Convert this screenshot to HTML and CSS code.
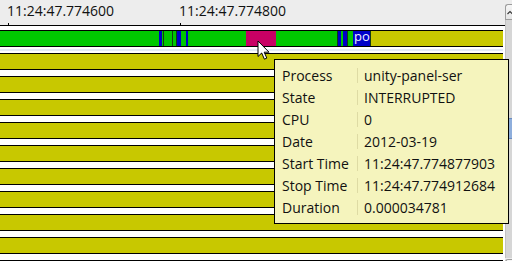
FILE: index.html
```html
<!DOCTYPE html>
<html lang="en">
<head>
    <meta charset="UTF-8">
    <meta name="viewport" content="width=device-width, initial-scale=1.0">
    <title>CPU Timeline</title>
    <link rel="stylesheet" href="styles.css">
</head>
<body>
    <div class="window">
        <div class="chart">
            <div class="ruler">
                <div class="tick"><span>11:24:47.774600</span><i></i></div>
                <div class="tick"><span>11:24:47.774800</span><i></i></div>
            </div>
            <div class="rows">
                <div class="row cpu">
                    <div class="seg run" style="width:159px"></div>
                    <div class="seg irq" style="width:3px"></div>
                    <div class="seg run" style="width:1px"></div>
                    <div class="seg edge" style="width:1px"></div>
                    <div class="seg run" style="width:8px"></div>
                    <div class="seg edge" style="width:1px"></div>
                    <div class="seg run" style="width:3px"></div>
                    <div class="seg edge" style="width:1px"></div>
                    <div class="seg irq" style="width:4px"></div>
                    <div class="seg run" style="width:5px"></div>
                    <div class="seg irq" style="width:2px"></div>
                    <div class="seg run" style="width:58px"></div>
                    <div class="seg intr" style="width:30px"></div>
                    <div class="seg run" style="width:61px"></div>
                    <div class="seg edge" style="width:1px"></div>
                    <div class="seg irq" style="width:3px"></div>
                    <div class="seg run" style="width:2px"></div>
                    <div class="seg irq" style="width:4px"></div>
                    <div class="seg edge" style="width:1px"></div>
                    <div class="seg run" style="width:5px"></div>
                    <div class="seg irq label" style="width:17px">po</div>
                    <div class="seg edge" style="width:1px"></div>
                </div>
                <div class="hl"></div>
                <div class="row"></div>
                <div class="row"></div>
                <div class="row"></div>
                <div class="row"></div>
                <div class="row"></div>
                <div class="row"></div>
                <div class="row"></div>
                <div class="row"></div>
                <div class="row"></div>
                <div class="row"></div>
            </div>
        </div>

        <div class="scrollbar">
            <div class="sb-btn up">
                <svg width="7" height="14" viewBox="0 0 7 14"><path d="M1.5 9 L4 6.5 L6.5 9" fill="none" stroke="#333" stroke-width="1.2"/></svg>
            </div>
            <div class="sb-trough"><div class="sb-thumb"></div></div>
            <div class="sb-btn down">
                <svg width="7" height="14" viewBox="0 0 7 14"><path d="M1.5 4 L4 6.5 L6.5 4" fill="none" stroke="#333" stroke-width="1.2"/></svg>
            </div>
        </div>

        <!-- hover tooltip -->
        <div class="tooltip">
            <div class="key">Process</div><div class="sep"></div><div class="val">unity-panel-ser</div>
            <div class="key">State</div><div class="sep"></div><div class="val">INTERRUPTED</div>
            <div class="key">CPU</div><div class="sep"></div><div class="val">0</div>
            <div class="key">Date</div><div class="sep"></div><div class="val">2012-03-19</div>
            <div class="key">Start Time</div><div class="sep"></div><div class="val">11:24:47.774877903</div>
            <div class="key">Stop Time</div><div class="sep"></div><div class="val">11:24:47.774912684</div>
            <div class="key">Duration</div><div class="sep"></div><div class="val">0.000034781</div>
        </div>

        <svg class="cursor" width="13" height="21" viewBox="0 0 13 21">
            <path d="M1 1 L1 16.5 L4.7 13 L7.4 19.2 L9.8 18.1 L7.2 12.2 L12 12.2 Z" fill="#fff" stroke="#000" stroke-width="1" stroke-linejoin="round"/>
        </svg>
    </div>
</body>
</html>
```

FILE: styles.css
```css
body {
    margin: 0;
    background-color: #ededed;
    font-family: "Open Sans", "DejaVu Sans", sans-serif;
}

.window {
    position: relative;
    display: flex;
    width: 512px;
    height: 261px;
    overflow: hidden;
    background-color: #ededed;
}

.chart {
    width: 505px;
    flex-shrink: 0;
    background-color: #ffffff;
}

/* Time ruler */
.ruler {
    display: flex;
    height: 25px;
    padding-left: 8px;
    background-color: #ededed;
    border-bottom: 1px solid #000;
    box-sizing: content-box;
}

.tick {
    display: flex;
    flex-direction: column;
    justify-content: space-between;
    width: 172px;
    font-size: 14px;
    line-height: 19px;
    color: #111;
}

.tick span {
    margin-left: -1px;
    padding-top: 1px;
    white-space: nowrap;
}

.tick i {
    display: block;
    width: 1px;
    height: 2px;
    background-color: #000;
}

/* Rows */
.rows {
    padding-top: 4px;
    padding-right: 2px;
}

.row {
    display: flex;
    height: 15px;
    margin-bottom: 6px;
    border-top: 1px solid #000;
    border-bottom: 1px solid #000;
    background-color: #c8c800;
}

.row.cpu {
    margin-bottom: 2px;
}

.hl {
    height: 2px;
    margin-bottom: 2px;
    background-color: #e3eaf6;
}

.seg {
    flex-shrink: 0;
    height: 15px;
}

.run {
    background-color: #00c800;
}

.irq {
    background-color: #0000c8;
}

.intr {
    background-color: #c80064;
}

.edge {
    background-color: #143c14;
}

.label {
    box-sizing: border-box;
    padding-left: 1px;
    font-size: 13px;
    line-height: 11px;
    color: #eef0ff;
    white-space: nowrap;
}

/* Scrollbar */
.scrollbar {
    display: flex;
    flex-direction: column;
    width: 7px;
    margin-top: 4px;
    flex-shrink: 0;
}

.sb-btn {
    height: 16px;
    flex-shrink: 0;
    box-sizing: border-box;
    border: 1px solid #9c9c9c;
    border-right: none;
    background: linear-gradient(#f6f6f6, #e4e4e4);
}

.sb-btn svg {
    display: block;
}

.sb-btn.up {
    border-radius: 3px 0 0 0;
}

.sb-btn.down {
    margin-top: 1px;
    border-radius: 3px 0 0 0;
}

.sb-trough {
    height: 238px;
    flex-shrink: 0;
    box-sizing: border-box;
    border-left: 1px solid #c2c2c2;
    background-color: #d6d6d6;
}

.sb-thumb {
    height: 19px;
    margin-top: 98px;
    background-color: #8eaedc;
    border-top: 1px solid #6a8cc0;
    border-bottom: 1px solid #6a8cc0;
}

/* Tooltip */
.tooltip {
    position: absolute;
    left: 274px;
    top: 59px;
    width: 235px;
    height: 165px;
    box-sizing: border-box;
    padding: 5px 0 4px 7px;
    border: 1px solid #000;
    background-color: #f5f4bd;
    display: grid;
    grid-template-columns: 75px 1px 1fr;
    grid-auto-rows: 22px;
    font-size: 14px;
    line-height: 22px;
    color: #111;
}

.sep {
    margin: 3px 0 4px;
    background-color: #dedba4;
}

.val {
    padding-left: 6px;
    white-space: nowrap;
}

.cursor {
    position: absolute;
    left: 257px;
    top: 40px;
}
```
